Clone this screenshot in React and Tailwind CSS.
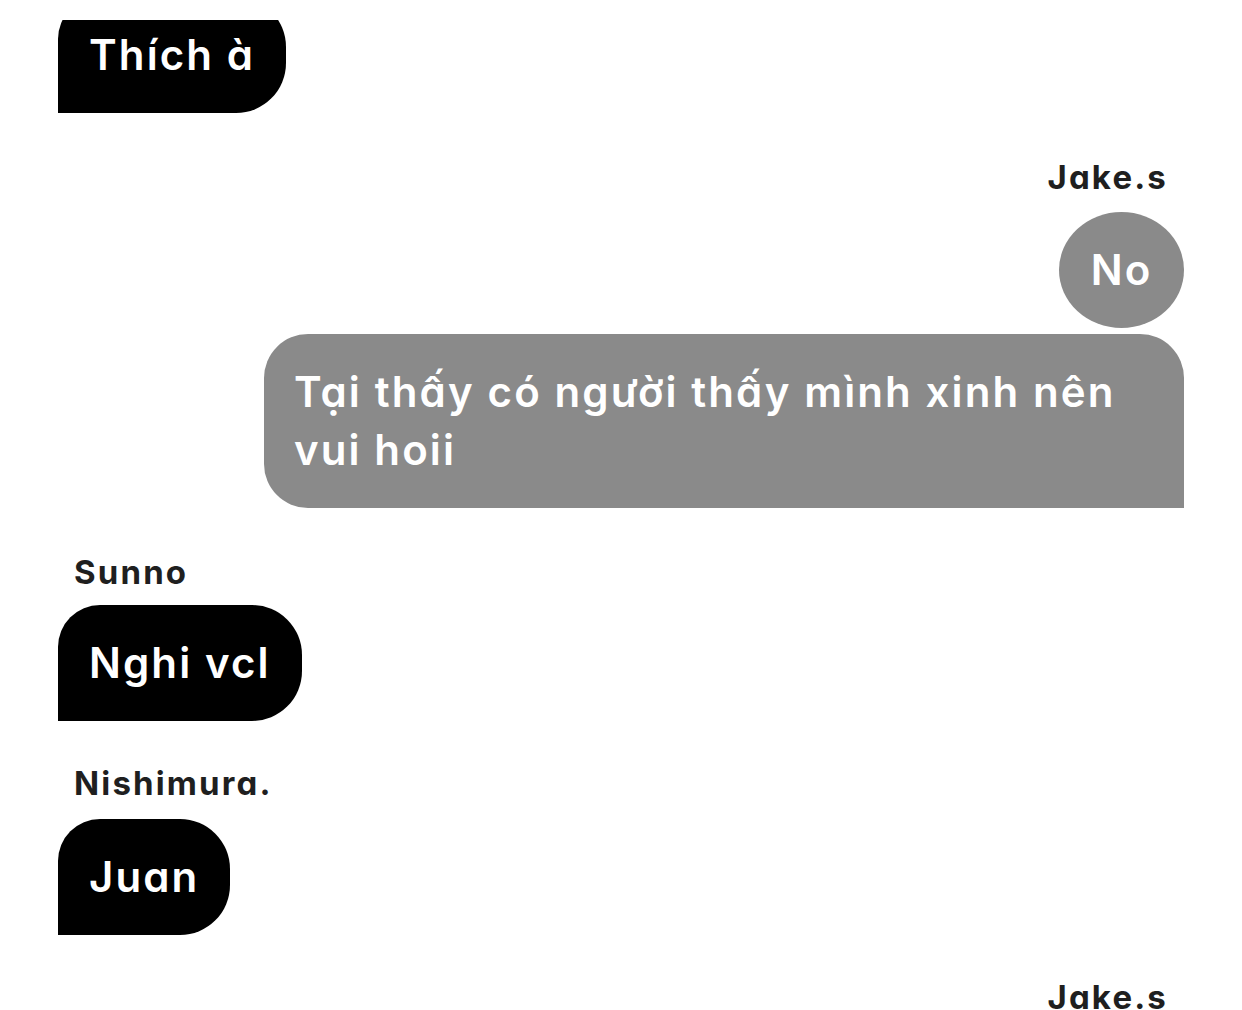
import React from 'react';

const font = "font-['Inter','Noto_Sans',sans-serif] [font-feature-settings:'cv11']";

function Name({ children, right }) {
    return (
        <div className={`text-[33px] leading-[40px] font-bold tracking-[0.065em] text-[#1f1f1f] ${right ? 'self-end pr-4' : 'self-start pl-4'}`}>
            {children}
        </div>
    );
}

function Bubble({ children, mine, round, className = '' }) {
    let shape;
    if (round) shape = 'bg-[#8a8a8a] rounded-[50%] self-end';
    else if (mine) shape = 'bg-[#8a8a8a] rounded-tl-[44px] rounded-tr-[44px] rounded-bl-[44px] self-end';
    else shape = 'bg-black rounded-tl-[42px] rounded-tr-[50px] rounded-br-[50px] self-start';
    return (
        <div className={`${shape} py-[29px] text-[42px] leading-[58px] font-semibold tracking-[0.05em] text-white ${className}`}>
            {children}
        </div>
    );
}

export default function App() {
    return (
        <div className={`w-[1242px] h-[1010px] overflow-hidden bg-white ${font}`}>
            <div className="flex flex-col px-[58px] pt-[20px]">
                {/* first bubble is partly scrolled out of view */}
                <div className="h-[93px] overflow-hidden self-start">
                    <Bubble className="-mt-[23px] px-[31px]">Thích à</Bubble>
                </div>

                <div className="mt-[44px] flex flex-col">
                    <Name right>Jake.s</Name>
                    <Bubble round className="mt-[15px] w-[125px] h-[116px] flex items-center justify-center">No</Bubble>
                    <Bubble mine className="mt-[6px] w-[920px] px-[30px]">
                        Tại thấy có người thấy mình xinh nên<br />vui hoii
                    </Bubble>
                </div>

                <div className="mt-[44px] flex flex-col">
                    <Name>Sunno</Name>
                    <Bubble className="mt-[13px] px-[31px]">Nghi vcl</Bubble>
                </div>

                <div className="mt-[42px] flex flex-col">
                    <Name>Nishimura.</Name>
                    <Bubble className="mt-[16px] px-[31px]">Juan</Bubble>
                </div>

                <div className="mt-[42px] flex flex-col">
                    <Name right>Jake.s</Name>
                </div>
            </div>
        </div>
    );
}
